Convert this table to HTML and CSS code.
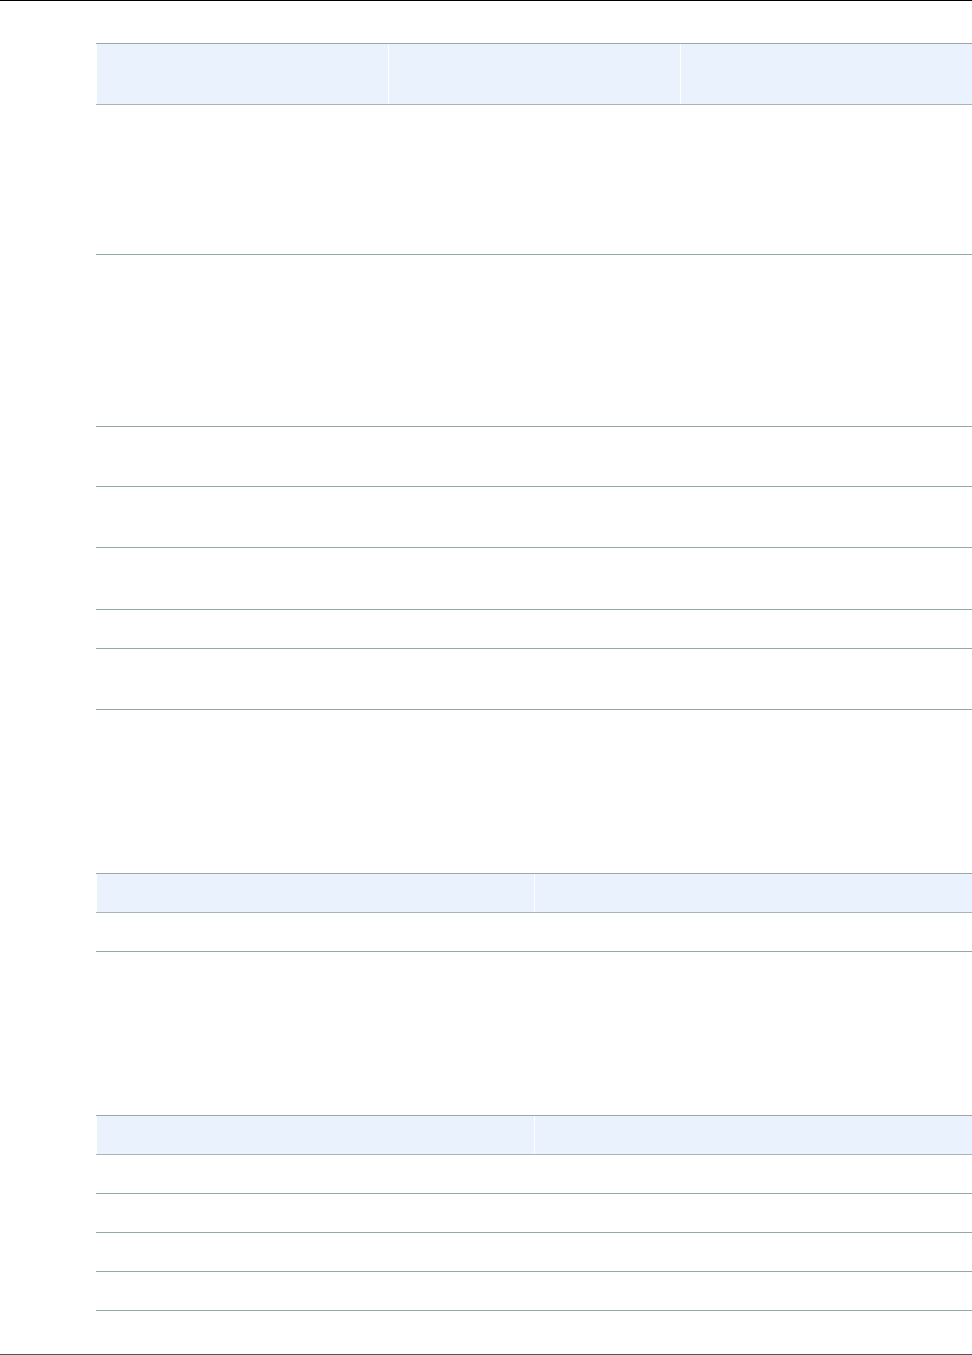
FILE: index.html
```html
<!DOCTYPE html>
<html lang="en">
<head>
    <meta charset="UTF-8">
    <meta name="viewport" content="width=device-width, initial-scale=1.0">
    <title>Reference tables</title>
    <link rel="stylesheet" href="styles.css">
</head>
<body>
    <div class="page">
        <div class="grid cols-3">
            <div class="row head h62">
                <div class="cell"></div>
                <div class="cell"></div>
                <div class="cell"></div>
            </div>
            <div class="row h150"><div class="cell"></div><div class="cell"></div><div class="cell"></div></div>
            <div class="row h172"><div class="cell"></div><div class="cell"></div><div class="cell"></div></div>
            <div class="row h60"><div class="cell"></div><div class="cell"></div><div class="cell"></div></div>
            <div class="row h61"><div class="cell"></div><div class="cell"></div><div class="cell"></div></div>
            <div class="row h62"><div class="cell"></div><div class="cell"></div><div class="cell"></div></div>
            <div class="row h39"><div class="cell"></div><div class="cell"></div><div class="cell"></div></div>
            <div class="row h61"><div class="cell"></div><div class="cell"></div><div class="cell"></div></div>
        </div>

        <div class="grid cols-2">
            <div class="row head h40">
                <div class="cell"></div>
                <div class="cell"></div>
            </div>
            <div class="row h39"><div class="cell"></div><div class="cell"></div></div>
        </div>

        <div class="grid cols-2">
            <div class="row head h40">
                <div class="cell"></div>
                <div class="cell"></div>
            </div>
            <div class="row h39"><div class="cell"></div><div class="cell"></div></div>
            <div class="row h39"><div class="cell"></div><div class="cell"></div></div>
            <div class="row h39"><div class="cell"></div><div class="cell"></div></div>
            <div class="row h39"><div class="cell"></div><div class="cell"></div></div>
        </div>
    </div>
    <div class="footer"></div>
</body>
</html>
```

FILE: styles.css
```css
html, body {
    margin: 0;
    padding: 0;
    background: #fff;
    font-family: "Liberation Sans", Arial, sans-serif;
    overflow: hidden;
}
* {
    box-sizing: border-box;
}
.page {
    border-top: 1px solid #000;
    height: 1354px;
    padding-top: 42px;
}
.grid {
    margin-left: 96px;
    width: 876px;
    margin-bottom: 163px;
}
.row {
    display: grid;
    border-bottom: 1px solid #97a7a4;
}
.cols-3 .row {
    grid-template-columns: 292px 292px 292px;
}
.cols-2 .row {
    grid-template-columns: 438px 438px;
}
.row.head {
    border-top: 1px solid #9ea6a6;
    border-bottom-color: #a8b6bb;
}
.row.head .cell {
    background: #eaf2fd;
    border-left: 1px solid #fff;
}
.h39 { height: 39px; }
.h40 { height: 40px; }
.h60 { height: 60px; }
.h61 { height: 61px; }
.h62 { height: 62px; }
.h150 { height: 150px; }
.h172 { height: 172px; }
.footer {
    height: 1px;
    background: #555;
}
```
